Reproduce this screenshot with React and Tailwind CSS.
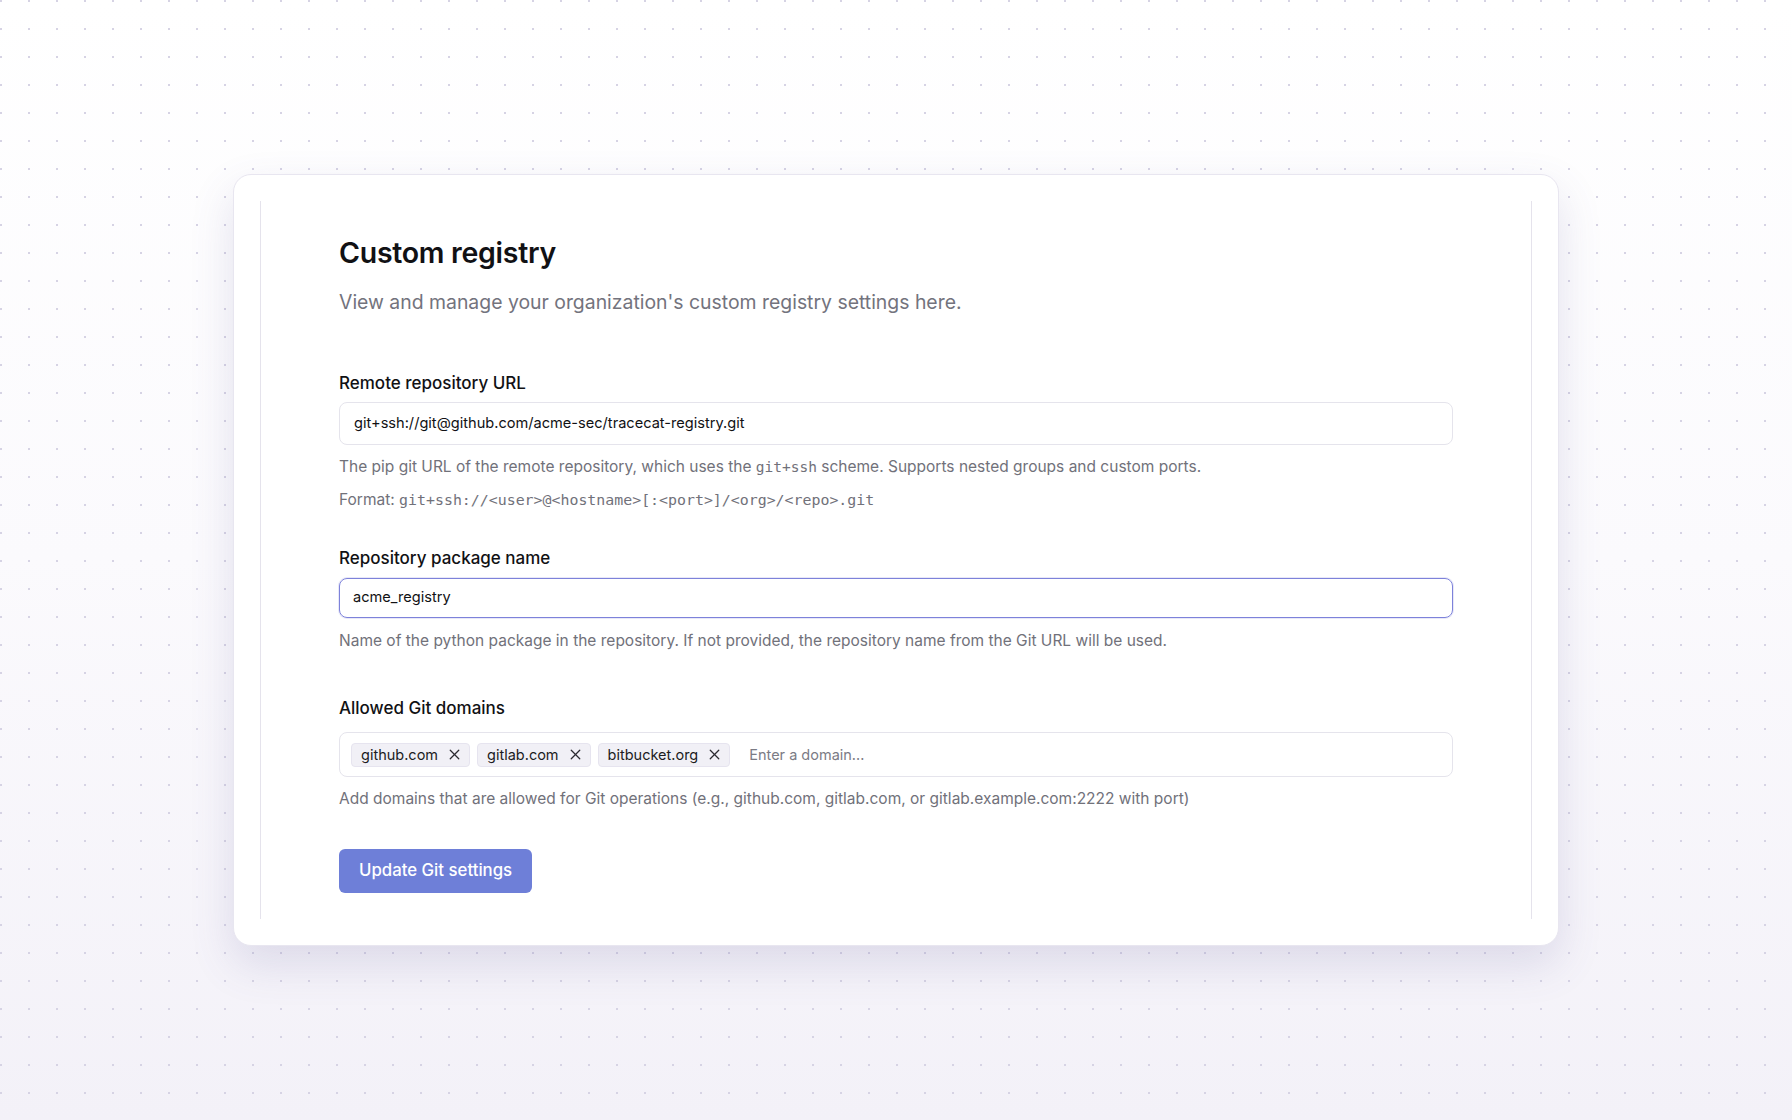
import React from "react";
import { X } from "lucide-react";

function Tag({ label }) {
  return (
    <span className="flex h-6 items-center gap-[8px] rounded-[4px] border border-[#e6e4ef] bg-[#f1f0f6] pl-[9px] pr-[6px] text-[14.5px] text-[#1c1c22]">
      {label}
      <X size={17} strokeWidth={1.8} className="text-[#2a2a30]" />
    </span>
  );
}

export default function App() {
  return (
    <div className="min-h-[1120px] w-full bg-gradient-to-b from-white via-[#fbfafd] to-[#f3f1f8] font-['Inter','Noto_Sans',sans-serif]">
      <div className="flex min-h-[1120px] w-full items-center justify-center bg-[radial-gradient(circle_at_1px_1px,#d6d3e4_1px,transparent_1.2px)] bg-[size:28px_28px]">
        <div className="w-[1326px] rounded-[18px] border border-[#e8e6f0] bg-white p-[26px] shadow-[0_18px_44px_rgba(90,80,150,0.16)]">
          <div className="border-x border-[#e5e3ec] px-[78px] pb-[26px] pt-[34px]">
            <h1 className="text-[28.5px] font-semibold leading-[36px] tracking-[-0.01em] text-[#111114]">
              Custom registry
            </h1>
            <p className="mt-[17px] text-[19.4px] leading-[28px] text-[#73737d]">
              View and manage your organization's custom registry settings here.
            </p>

            <div className="mt-[55px]">
              <label className="block text-[17px] font-medium leading-[24px] text-[#111114]">
                Remote repository URL
              </label>
              <div className="mt-[7px] flex h-[43px] items-center rounded-lg border border-[#e5e4ec] px-[14px] text-[14.6px] text-[#111114]">
                git+ssh://git@github.com/acme-sec/tracecat-registry.git
              </div>
              <p className="mt-[12px] text-[15.5px] leading-[20px] text-[#71717a]">
                The pip git URL of the remote repository, which uses the{" "}
                <code className="font-['DejaVu_Sans_Mono',monospace] text-[14.5px]">git+ssh</code> scheme. Supports nested groups and custom ports.
              </p>
              <p className="mt-[13px] text-[15.5px] leading-[20px] text-[#71717a]">
                Format:{" "}
                <code className="font-['DejaVu_Sans_Mono',monospace] text-[14.9px]">
                  git+ssh://&lt;user&gt;@&lt;hostname&gt;[:&lt;port&gt;]/&lt;org&gt;/&lt;repo&gt;.git
                </code>
              </p>
            </div>

            <div className="mt-[36px]">
              <label className="block text-[17px] font-medium leading-[24px] text-[#111114]">
                Repository package name
              </label>
              <div className="mt-[8px] flex h-[40px] items-center rounded-lg border-[1.5px] border-[#7d82da] px-[13px] text-[14.6px] text-[#111114] shadow-[0_0_0_1px_rgba(125,130,218,0.18)]">
                acme_registry
              </div>
              <p className="mt-[13px] text-[15.5px] leading-[20px] text-[#71717a]">
                Name of the python package in the repository. If not provided, the repository name from the Git URL will be used.
              </p>
            </div>

            <div className="mt-[45px]">
              <label className="block text-[17px] font-medium leading-[24px] text-[#111114]">
                Allowed Git domains
              </label>
              <div className="mt-[12px] flex h-[45px] items-center gap-[7px] rounded-lg border border-[#e5e4ec] px-[11px]">
                <Tag label="github.com" />
                <Tag label="gitlab.com" />
                <Tag label="bitbucket.org" />
                <span className="ml-[12px] text-[14.5px] text-[#7b7b85]">Enter a domain...</span>
              </div>
              <p className="mt-[12px] text-[15.5px] leading-[20px] text-[#71717a]">
                Add domains that are allowed for Git operations (e.g., github.com, gitlab.com, or gitlab.example.com:2222 with port)
              </p>
            </div>

            <button className="mt-[40px] flex h-[44px] items-center rounded-md bg-[#6e7fd8] px-5 text-[16.8px] font-medium text-white">
              Update Git settings
            </button>
          </div>
        </div>
      </div>
    </div>
  );
}
